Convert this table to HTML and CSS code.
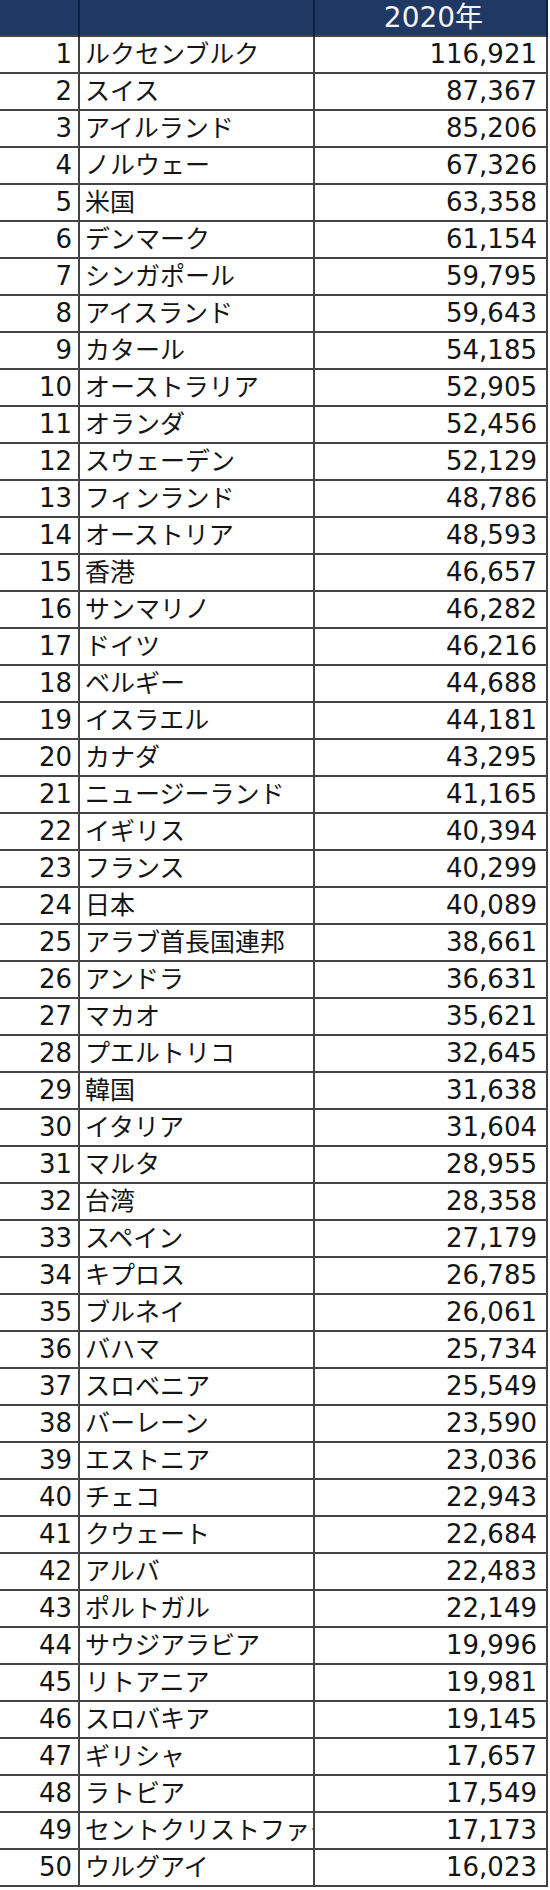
FILE: index.html
```html
<!DOCTYPE html>
<html lang="ja">
<head>
<meta charset="utf-8">
<link rel="stylesheet" href="styles.css">
</head>
<body>
<table class="rank">
<colgroup><col class="c-no"><col class="c-name"><col class="c-val"></colgroup>
<thead>
<tr><th></th><th></th><th class="year">2020年</th></tr>
</thead>
<tbody id="rows">
<tr><td class="no">1</td><td class="name"><span>ルクセンブルク</span></td><td class="val">116,921</td></tr>
<tr><td class="no">2</td><td class="name"><span>スイス</span></td><td class="val">87,367</td></tr>
<tr><td class="no">3</td><td class="name"><span>アイルランド</span></td><td class="val">85,206</td></tr>
<tr><td class="no">4</td><td class="name"><span>ノルウェー</span></td><td class="val">67,326</td></tr>
<tr><td class="no">5</td><td class="name"><span>米国</span></td><td class="val">63,358</td></tr>
<tr><td class="no">6</td><td class="name"><span>デンマーク</span></td><td class="val">61,154</td></tr>
<tr><td class="no">7</td><td class="name"><span>シンガポール</span></td><td class="val">59,795</td></tr>
<tr><td class="no">8</td><td class="name"><span>アイスランド</span></td><td class="val">59,643</td></tr>
<tr><td class="no">9</td><td class="name"><span>カタール</span></td><td class="val">54,185</td></tr>
<tr><td class="no">10</td><td class="name"><span>オーストラリア</span></td><td class="val">52,905</td></tr>
<tr><td class="no">11</td><td class="name"><span>オランダ</span></td><td class="val">52,456</td></tr>
<tr><td class="no">12</td><td class="name"><span>スウェーデン</span></td><td class="val">52,129</td></tr>
<tr><td class="no">13</td><td class="name"><span>フィンランド</span></td><td class="val">48,786</td></tr>
<tr><td class="no">14</td><td class="name"><span>オーストリア</span></td><td class="val">48,593</td></tr>
<tr><td class="no">15</td><td class="name"><span>香港</span></td><td class="val">46,657</td></tr>
<tr><td class="no">16</td><td class="name"><span>サンマリノ</span></td><td class="val">46,282</td></tr>
<tr><td class="no">17</td><td class="name"><span>ドイツ</span></td><td class="val">46,216</td></tr>
<tr><td class="no">18</td><td class="name"><span>ベルギー</span></td><td class="val">44,688</td></tr>
<tr><td class="no">19</td><td class="name"><span>イスラエル</span></td><td class="val">44,181</td></tr>
<tr><td class="no">20</td><td class="name"><span>カナダ</span></td><td class="val">43,295</td></tr>
<tr><td class="no">21</td><td class="name"><span>ニュージーランド</span></td><td class="val">41,165</td></tr>
<tr><td class="no">22</td><td class="name"><span>イギリス</span></td><td class="val">40,394</td></tr>
<tr><td class="no">23</td><td class="name"><span>フランス</span></td><td class="val">40,299</td></tr>
<tr><td class="no">24</td><td class="name"><span>日本</span></td><td class="val">40,089</td></tr>
<tr><td class="no">25</td><td class="name"><span>アラブ首長国連邦</span></td><td class="val">38,661</td></tr>
<tr><td class="no">26</td><td class="name"><span>アンドラ</span></td><td class="val">36,631</td></tr>
<tr><td class="no">27</td><td class="name"><span>マカオ</span></td><td class="val">35,621</td></tr>
<tr><td class="no">28</td><td class="name"><span>プエルトリコ</span></td><td class="val">32,645</td></tr>
<tr><td class="no">29</td><td class="name"><span>韓国</span></td><td class="val">31,638</td></tr>
<tr><td class="no">30</td><td class="name"><span>イタリア</span></td><td class="val">31,604</td></tr>
<tr><td class="no">31</td><td class="name"><span>マルタ</span></td><td class="val">28,955</td></tr>
<tr><td class="no">32</td><td class="name"><span>台湾</span></td><td class="val">28,358</td></tr>
<tr><td class="no">33</td><td class="name"><span>スペイン</span></td><td class="val">27,179</td></tr>
<tr><td class="no">34</td><td class="name"><span>キプロス</span></td><td class="val">26,785</td></tr>
<tr><td class="no">35</td><td class="name"><span>ブルネイ</span></td><td class="val">26,061</td></tr>
<tr><td class="no">36</td><td class="name"><span>バハマ</span></td><td class="val">25,734</td></tr>
<tr><td class="no">37</td><td class="name"><span>スロベニア</span></td><td class="val">25,549</td></tr>
<tr><td class="no">38</td><td class="name"><span>バーレーン</span></td><td class="val">23,590</td></tr>
<tr><td class="no">39</td><td class="name"><span>エストニア</span></td><td class="val">23,036</td></tr>
<tr><td class="no">40</td><td class="name"><span>チェコ</span></td><td class="val">22,943</td></tr>
<tr><td class="no">41</td><td class="name"><span>クウェート</span></td><td class="val">22,684</td></tr>
<tr><td class="no">42</td><td class="name"><span>アルバ</span></td><td class="val">22,483</td></tr>
<tr><td class="no">43</td><td class="name"><span>ポルトガル</span></td><td class="val">22,149</td></tr>
<tr><td class="no">44</td><td class="name"><span>サウジアラビア</span></td><td class="val">19,996</td></tr>
<tr><td class="no">45</td><td class="name"><span>リトアニア</span></td><td class="val">19,981</td></tr>
<tr><td class="no">46</td><td class="name"><span>スロバキア</span></td><td class="val">19,145</td></tr>
<tr><td class="no">47</td><td class="name"><span>ギリシャ</span></td><td class="val">17,657</td></tr>
<tr><td class="no">48</td><td class="name"><span>ラトビア</span></td><td class="val">17,549</td></tr>
<tr><td class="no">49</td><td class="name"><span>セントクリストファー</span></td><td class="val">17,173</td></tr>
<tr><td class="no">50</td><td class="name"><span>ウルグアイ</span></td><td class="val">16,023</td></tr>
</tbody>
</table>
</body>
</html>
```

FILE: styles.css
```css
html, body {
  margin: 0;
  padding: 0;
  background: #ffffff;
}

.rank {
  border-collapse: collapse;
  table-layout: fixed;
  width: 547px;
  font-family: "DejaVu Sans", "Noto Sans CJK JP", sans-serif;
  color: #151515;
}

.c-no { width: 79px; }
.c-name { width: 235px; }
.c-val { width: 233px; }

.rank thead tr {
  height: 36px;
}

.rank th {
  background: #203864;
  border-left: 2px solid #10203f;
  border-right: 2px solid #10203f;
  padding: 0;
  font-weight: normal;
}

.rank th:first-child {
  border-left: none;
}

.rank th.year {
  color: #f4f4f4;
  font-size: 28px;
  line-height: 34px;
  text-align: center;
  padding-left: 6px;
}

.rank tbody tr {
  height: 37px;
}

.rank td {
  border: 2px solid #444444;
  padding: 0;
  height: 35px;
  line-height: 33px;
  white-space: nowrap;
  overflow: hidden;
}

.rank td:first-child {
  border-left: none;
}

.rank td.no {
  font-size: 26px;
  text-align: right;
  padding-right: 6px;
}

.rank td.name {
  font-size: 25px;
  text-align: left;
  padding-left: 5px;
}

.rank td.name span {
  display: block;
  overflow: hidden;
}

.rank td.val {
  font-size: 26px;
  text-align: right;
  padding-right: 9px;
}
```
